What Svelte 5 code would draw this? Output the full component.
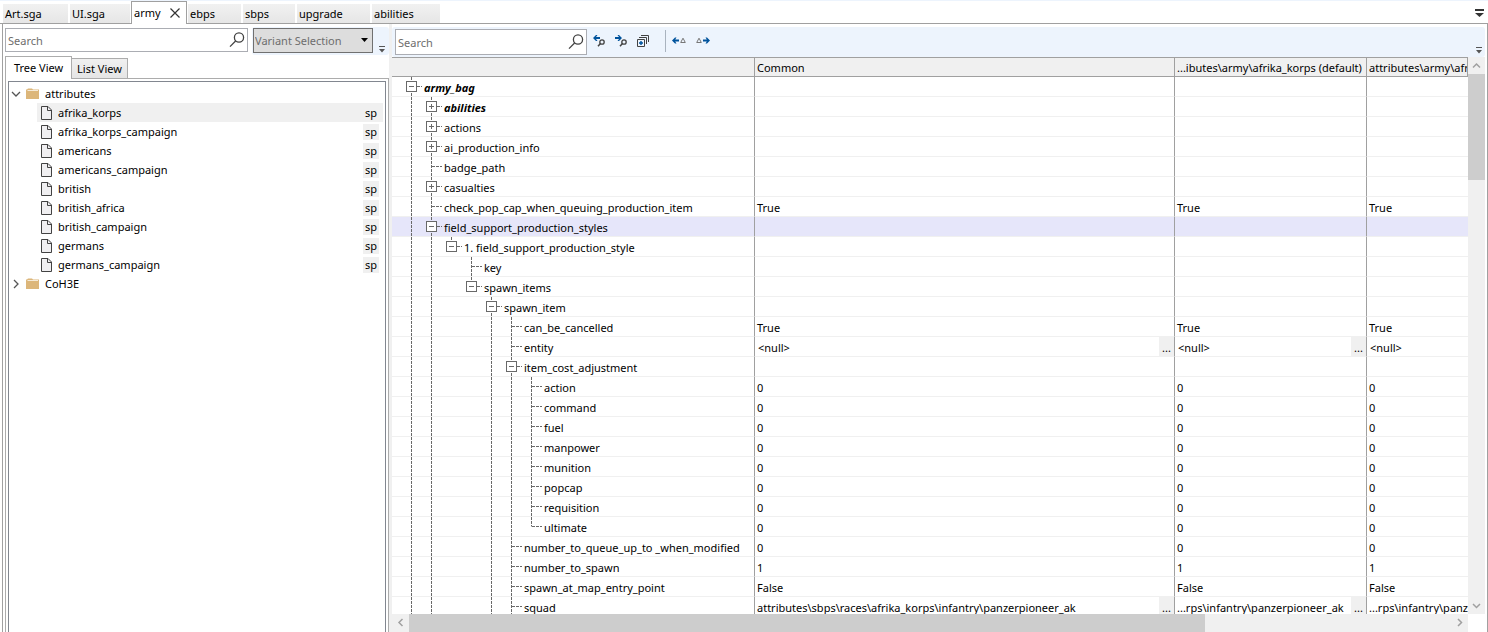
<script lang="ts">
  interface Row {
    name: string;
    depth: number;
    // levels whose vertical guide runs through the full row
    lines?: number[];
    open?: boolean;
    last?: boolean;
    bold?: boolean;
    selected?: boolean;
    value?: string;
    short?: string;
    browse?: boolean;
  }

  const documents = [
    { title: 'Art.sga', width: 65 },
    { title: 'UI.sga', width: 60 },
    { title: 'army', width: 56, active: true },
    { title: 'ebps', width: 53 },
    { title: 'sbps', width: 52 },
    { title: 'upgrade', width: 73 },
    { title: 'abilities', width: 68 },
  ];

  const files = [
    'afrika_korps',
    'afrika_korps_campaign',
    'americans',
    'americans_campaign',
    'british',
    'british_africa',
    'british_campaign',
    'germans',
    'germans_campaign',
  ];

  const cost = ['action', 'command', 'fuel', 'manpower', 'munition', 'popcap', 'requisition', 'ultimate'];

  const rows: Row[] = [
    { name: 'army_bag', depth: 0, open: true, bold: true },
    { name: 'abilities', depth: 1, lines: [0], open: false, bold: true },
    { name: 'actions', depth: 1, lines: [0], open: false },
    { name: 'ai_production_info', depth: 1, lines: [0], open: false },
    { name: 'badge_path', depth: 1, lines: [0] },
    { name: 'casualties', depth: 1, lines: [0], open: false },
    { name: 'check_pop_cap_when_queuing_production_item', depth: 1, lines: [0], value: 'True' },
    { name: 'field_support_production_styles', depth: 1, lines: [0], open: true, selected: true },
    { name: '1. field_support_production_style', depth: 2, lines: [0, 1], open: true, last: true },
    { name: 'key', depth: 3, lines: [0, 1] },
    { name: 'spawn_items', depth: 3, lines: [0, 1], open: true, last: true },
    { name: 'spawn_item', depth: 4, lines: [0, 1], open: true },
    { name: 'can_be_cancelled', depth: 5, lines: [0, 1, 4], value: 'True' },
    { name: 'entity', depth: 5, lines: [0, 1, 4], value: '<null>', browse: true },
    { name: 'item_cost_adjustment', depth: 5, lines: [0, 1, 4], open: true },
    ...cost.map((name, i) => ({
      name,
      depth: 6,
      lines: [0, 1, 4, 5],
      value: '0',
      last: i === cost.length - 1,
    })),
    { name: 'number_to_queue_up_to _when_modified', depth: 5, lines: [0, 1, 4], value: '0' },
    { name: 'number_to_spawn', depth: 5, lines: [0, 1, 4], value: '1' },
    { name: 'spawn_at_map_entry_point', depth: 5, lines: [0, 1, 4], value: 'False' },
    {
      name: 'squad',
      depth: 5,
      lines: [0, 1, 4],
      value: 'attributes\\sbps\\races\\afrika_korps\\infantry\\panzerpioneer_ak',
      short: '...rps\\infantry\\panzerpioneer_ak',
      browse: true,
    },
  ];

  let view = $state('tree');
</script>

{#snippet magnifier()}
  <svg class="magnifier" width="16" height="16" viewBox="0 0 16 16" aria-hidden="true">
    <circle cx="10" cy="5.5" r="4.6" />
    <path d="M6.6 9 L1 14.6" />
  </svg>
{/snippet}

{#snippet overflowMark()}
  <svg width="6" height="7" viewBox="0 0 6 7" aria-hidden="true">
    <path d="M0 0H6V1H0ZM0 3H6L3 6.5Z" fill="#555" />
  </svg>
{/snippet}

{#snippet folderIcon()}
  <svg width="14" height="12" viewBox="0 0 14 12" aria-hidden="true">
    <path d="M0 11V1.5H1L2 .5H6L7 1.5H13V11Z" fill="#dcb67a" />
    <path d="M1.5 2.5H12" stroke="#f5ead7" />
  </svg>
{/snippet}

<div class="window">
  <nav class="documents">
    {#each documents as doc}
      <div class="document" class:active={doc.active} style:width="{doc.width}px">
        <button class="title">{doc.title}</button>
        {#if doc.active}
          <button class="close" aria-label="Close">
            <svg width="10" height="10" viewBox="0 0 10 10"><path d="M.5 .5L9.5 9.5M9.5 .5L.5 9.5" /></svg>
          </button>
        {/if}
      </div>
    {/each}
    <button class="document-menu" aria-label="Open documents">
      <svg width="9" height="8" viewBox="0 0 9 8"><path d="M0 0H9V2H0ZM0 4H9L4.5 8Z" fill="#333" /></svg>
    </button>
  </nav>

  <div class="workspace">
    <aside class="explorer">
      <div class="explorer-bar">
        <label class="search">
          <input type="text" placeholder="Search" aria-label="Search files" />
          {@render magnifier()}
        </label>
        <div class="variant">
          <div class="select-wrap">
            <select aria-label="Variant">
              <option>Variant Selection</option>
            </select>
            <svg class="arrow" width="7" height="4" viewBox="0 0 7 4" aria-hidden="true"><path d="M0 0H7L3.5 4Z" /></svg>
          </div>
          <button class="overflow" aria-label="More">{@render overflowMark()}</button>
        </div>
      </div>

      <div class="views">
        <button class="view tree-view" class:current={view === 'tree'} onclick={() => (view = 'tree')}>Tree View</button>
        <button class="view list-view" class:current={view === 'list'} onclick={() => (view = 'list')}>List View</button>
      </div>

      <div class="view-frame">
        <ul class="tree">
          <li class="folder">
            <svg class="chevron" width="10" height="10" viewBox="0 0 10 10"><path d="M1 3L5 7L9 3" /></svg>
            {@render folderIcon()}
            <span>attributes</span>
          </li>
          {#each files as file, i}
            <li class="file" class:selected={i === 0}>
              <svg width="11" height="14" viewBox="0 0 11 14">
                <path d="M.5 .5H7L10.5 4V13.5H.5Z" fill="#f0eff1" stroke="#424242" />
                <path d="M6.5 .5V4.5H10.5" fill="none" stroke="#424242" />
              </svg>
              <span class="file-name">{file}</span>
              <span class="badge">sp</span>
            </li>
          {/each}
          <li class="folder">
            <svg class="chevron" width="10" height="10" viewBox="0 0 10 10"><path d="M3 1L7 5L3 9" /></svg>
            {@render folderIcon()}
            <span>CoH3E</span>
          </li>
        </ul>
      </div>
    </aside>

    <div class="splitter"></div>

    <main class="editor">
      <div class="toolbar">
        <label class="search">
          <input type="text" placeholder="Search" aria-label="Search properties" />
          {@render magnifier()}
        </label>
        <button class="tool" aria-label="Find previous">
          <svg width="12" height="12" viewBox="0 0 12 12">
            <path d="M0 3L3 0H4.5L3 2H7V4H3L4.5 6H3Z" fill="#00539c" />
            <circle cx="9" cy="7" r="2.2" fill="none" stroke="#424242" stroke-width="1.3" />
            <path d="M7.4 8.600L5 11.2" stroke="#424242" stroke-width="1.5" />
          </svg>
        </button>
        <button class="tool" aria-label="Find next">
          <svg width="12" height="12" viewBox="0 0 12 12">
            <path d="M7 3L4 0H2.5L4 2H0V4H4L2.5 6H4Z" fill="#00539c" />
            <circle cx="9" cy="7" r="2.2" fill="none" stroke="#424242" stroke-width="1.3" />
            <path d="M7.4 8.600L5 11.2" stroke="#424242" stroke-width="1.5" />
          </svg>
        </button>
        <button class="tool" aria-label="Expand all">
          <svg width="12" height="12" viewBox="0 0 12 12" fill="none">
            <path d="M4 .5H11.5V7M2 2.5H9.5V9" stroke="#424242" />
            <path d="M.5 4.5H7.5V11.5H.5Z" stroke="#424242" />
            <path d="M4 6V10M2 8H6" stroke="#00539c" stroke-width="1.4" />
          </svg>
        </button>
        <span class="separator"></span>
        <button class="tool" aria-label="Previous change">
          <svg width="14" height="7" viewBox="0 0 14 7">
            <path d="M0 3.5L3 .5H4.5L3.2 2.5H7V4.5H3.2L4.5 6.5H3Z" fill="#00539c" />
            <path d="M8.7 5.5L11 1.2L13.3 5.5Z" fill="none" stroke="#777" />
          </svg>
        </button>
        <button class="tool" aria-label="Next change">
          <svg width="14" height="7" viewBox="0 0 14 7">
            <path d="M.7 5.5L3 1.2L5.3 5.5Z" fill="none" stroke="#777" />
            <path d="M14 3.5L11 .5H9.5L10.8 2.5H7V4.5H10.8L9.5 6.5H11Z" fill="#00539c" />
          </svg>
        </button>
        <button class="overflow" aria-label="More">{@render overflowMark()}</button>
      </div>

      <div class="grid">
        <div class="grid-view">
          <table>
            <colgroup>
              <col class="col-name" />
              <col class="col-common" />
              <col class="col-default" />
              <col />
            </colgroup>
            <thead>
              <tr>
                <th aria-label="Name"></th>
                <th>Common</th>
                <th>...ibutes\army\afrika_korps (default)</th>
                <th>attributes\army\afrika_korps_campaign</th>
              </tr>
            </thead>
            <tbody>
              {#each rows as row}
                <tr class:selected={row.selected}>
                  <td class="name">
                    <div class="node" class:bold={row.bold}>
                      {#each Array(row.depth) as _, level}
                        <svg class="guide" width="20" height="20">
                          {#if row.lines?.includes(level)}
                            <path d="M9.5 0V20" />
                          {/if}
                        </svg>
                      {/each}
                      {#if row.open !== undefined}
                        <button class="expander" aria-label={row.open ? 'Collapse' : 'Expand'}>
                          <svg class="guide" width="20" height="20">
                            <path d={row.last ? 'M9.5 0V5' : 'M9.5 0V20'} />
                            <path d="M15 9.5H20" />
                            <rect x="4.5" y="4.5" width="10" height="10" />
                            <path class="sign" d={row.open ? 'M7 9.5H12' : 'M7 9.5H12M9.5 7V12'} />
                          </svg>
                        </button>
                      {:else}
                        <svg class="guide" width="20" height="20">
                          <path d={row.last ? 'M9.5 0V9.5' : 'M9.5 0V20'} />
                          <path d="M10 9.5H20" />
                        </svg>
                      {/if}
                      <span class="label">{row.name}</span>
                    </div>
                  </td>
                  {#each [row.value, row.short ?? row.value, row.short ?? row.value] as value, i}
                    <td>
                      <div class="value" class:null={value === '<null>'}>
                        <span>{value ?? ''}</span>
                        {#if row.browse && i < 2}
                          <button class="browse" aria-label="Browse">...</button>
                        {/if}
                      </div>
                    </td>
                  {/each}
                </tr>
              {/each}
            </tbody>
          </table>
        </div>
        <div class="scroll vertical">
          <svg width="17" height="17"><path d="M5 10.5L8.5 7L12 10.5" /></svg>
          <div class="thumb"></div>
          <svg width="17" height="17"><path d="M5 7L8.5 10.5L12 7" /></svg>
        </div>
        <div class="scroll horizontal">
          <svg width="17" height="17"><path d="M10.5 5L7 8.5L10.5 12" /></svg>
          <div class="thumb"></div>
          <svg width="17" height="17"><path d="M7 5L10.5 8.5L7 12" /></svg>
        </div>
      </div>
    </main>
  </div>
</div>

<style>
  :global(body) {
    margin: 0;
    background: #fff;
  }

  .window {
    display: flex;
    flex-direction: column;
    height: 100vh;
    overflow: hidden;
    box-sizing: border-box;
    border-top: 1px solid #edf4fd;
    color: #000;
    font: 11px/16px 'Noto Sans', sans-serif;
  }

  button,
  input,
  select {
    margin: 0;
    padding: 0;
    border: 0;
    border-radius: 0;
    background: none;
    color: inherit;
    font: inherit;
  }

  svg {
    display: block;
    flex: none;
  }

  .documents {
    display: flex;
    align-items: flex-end;
    gap: 2px;
    flex: none;
    height: 23px;
    padding-left: 3px;
    box-shadow: inset 0 -1px #a0a0a0;
  }

  .document {
    display: flex;
    align-items: center;
    justify-content: space-between;
    flex: none;
    box-sizing: border-box;
    height: 19px;
    margin-bottom: 1px;
    padding-left: 2px;
    background: linear-gradient(#f1f1f1, #e6e6e6);
  }

  .document.active {
    height: 23px;
    margin: 0 -1px;
    padding-right: 6px;
    border: 1px solid #a0a0a0;
    border-bottom: 0;
    background: #fff;
  }

  .close path {
    stroke: #333;
    stroke-width: 1.2;
  }

  .document-menu {
    align-self: center;
    margin-left: auto;
    padding: 1px 4px 0 0;
  }

  .workspace {
    display: flex;
    flex: 1;
    min-height: 0;
    margin-left: 2px;
    border: solid #a0a0a0;
    border-width: 0 1px;
  }

  .explorer {
    display: flex;
    flex-direction: column;
    flex: none;
    width: 386px;
    padding: 3px 0 0 2px;
    box-sizing: border-box;
  }

  .explorer-bar {
    display: flex;
    gap: 4px;
    height: 29px;
  }

  .search {
    display: flex;
    align-items: center;
    flex: 1;
    box-sizing: border-box;
    height: 24px;
    margin-top: 1px;
    padding: 0 2px;
    border: 1px solid #abadb3;
    background: #fff;
  }

  .search input {
    flex: 1;
    min-width: 0;
    padding-top: 2px;
    outline: 0;
  }

  .search input::placeholder {
    color: #6d6d6d;
    opacity: 1;
  }

  .magnifier {
    fill: none;
    stroke: #424242;
    stroke-width: 1.3;
  }

  .variant {
    display: flex;
    align-items: flex-end;
    gap: 6px;
    height: 28px;
    padding: 0 4px 0 1px;
    border-radius: 3px;
    background: #edf4fd;
  }

  .select-wrap {
    position: relative;
    align-self: flex-start;
    margin-top: 1px;
  }

  select {
    appearance: none;
    display: block;
    box-sizing: border-box;
    width: 120px;
    height: 25px;
    padding-left: 1px;
    border: 1px solid #707070;
    background: #ddd;
    color: #6d6d6d;
  }

  .arrow {
    position: absolute;
    top: 10px;
    right: 5px;
    pointer-events: none;
  }

  .overflow {
    padding-bottom: 2px;
  }

  .views {
    display: flex;
    align-items: flex-end;
    flex: none;
    height: 22px;
  }

  .view {
    box-sizing: border-box;
    height: 20px;
    border: 1px solid #acacac;
    border-bottom: 0;
    background: linear-gradient(#f0f0f0, #e5e5e5);
  }

  .tree-view {
    width: 67px;
  }

  .list-view {
    width: 56px;
    border-left: 0;
  }

  .view.current {
    position: relative;
    height: 23px;
    margin-bottom: -1px;
    background: #fff;
  }

  .view-frame {
    display: flex;
    flex: 1;
    min-height: 0;
    padding: 2px 2px 0;
    border: 1px solid #acacac;
    border-bottom: 0;
  }

  .tree {
    flex: 1;
    margin: 0;
    padding: 2px;
    border: 1px solid #828790;
    border-bottom: 0;
    list-style: none;
  }

  .folder,
  .file {
    display: flex;
    align-items: center;
    height: 19px;
  }

  .folder {
    gap: 5px;
  }

  .chevron path {
    fill: none;
    stroke: #555;
    stroke-width: 1.3;
  }

  .file {
    gap: 6px;
    margin-left: 26px;
    padding: 0 4px;
  }

  .file.selected {
    background: #f0f0f0;
  }

  .file-name {
    flex: 1;
  }

  .badge {
    min-width: 12px;
    padding: 0 2px;
    background: #f0f0f0;
  }

  .splitter {
    flex: none;
    width: 3px;
    background: #f0f0f0;
  }

  .editor {
    display: flex;
    flex-direction: column;
    flex: 1;
    min-width: 0;
    padding: 3px 2px 0 0;
  }

  .toolbar {
    display: flex;
    align-items: center;
    gap: 10px;
    flex: none;
    height: 30px;
    padding-left: 3px;
    border-radius: 3px;
    background: #edf4fd;
  }

  .toolbar .search {
    flex: none;
    width: 192px;
    height: 26px;
    margin: 0 -4px 0 0;
  }

  .tool {
    margin-bottom: 3px;
  }

  .separator {
    width: 1px;
    height: 22px;
    margin: 0 -4px 2px 6px;
    background: #a9b3bf;
  }

  .toolbar .overflow {
    align-self: flex-end;
    margin-left: auto;
    padding: 0 3px 3px 0;
  }

  .grid {
    display: grid;
    grid-template: minmax(0, 1fr) 18px / minmax(0, 1fr) 17px;
    flex: 1;
    min-height: 0;
  }

  .grid-view {
    overflow: hidden;
  }

  table {
    width: 100%;
    table-layout: fixed;
    border-collapse: separate;
    border-spacing: 0;
  }

  .col-name {
    width: 363px;
  }

  .col-common {
    width: 420px;
  }

  .col-default {
    width: 192px;
  }

  th,
  td {
    overflow: hidden;
    box-sizing: border-box;
    height: 20px;
    padding: 0 0 0 2px;
    border-right: 1px solid #a0a0a0;
    border-bottom: 1px solid #f0f0f0;
    white-space: nowrap;
  }

  td:last-child {
    border-right: 0;
  }

  th {
    padding-top: 2px;
    border-top: 1px solid #a0a0a0;
    border-bottom-color: #a0a0a0;
    background: #f0f0f0;
    font-weight: 400;
    text-align: left;
  }

  td.name {
    padding-left: 10px;
  }

  .node,
  .value {
    display: flex;
    align-items: center;
    height: 19px;
  }

  .node.bold {
    font-weight: 700;
    font-style: italic;
  }

  .guide {
    fill: none;
    stroke: #696969;
    stroke-dasharray: 3 1;
  }

  .guide rect,
  .guide .sign {
    stroke-dasharray: none;
  }

  .guide rect {
    fill: #fff;
  }

  .label {
    padding: 2px 0 0 2px;
  }

  .value {
    justify-content: space-between;
  }

  .value span {
    padding-top: 2px;
  }

  .value.null {
    padding-left: 1px;
  }

  .browse {
    width: 15px;
    height: 19px;
    padding-top: 2px;
    background: #f0f0f0;
  }

  tr.selected td {
    background: #e6e6fa;
  }

  .scroll {
    display: flex;
    background: #f0f0f0;
  }

  .scroll path {
    fill: none;
    stroke: #a0a0a0;
    stroke-width: 1.5;
  }

  .scroll .thumb {
    background: #cdcdcd;
  }

  .scroll svg:last-child {
    margin-top: auto;
  }

  .vertical {
    flex-direction: column;
  }

  .vertical .thumb {
    height: 19%;
  }

  .horizontal .thumb {
    width: 74%;
  }

  .horizontal svg:last-child {
    margin: 0 0 0 auto;
  }
</style>
